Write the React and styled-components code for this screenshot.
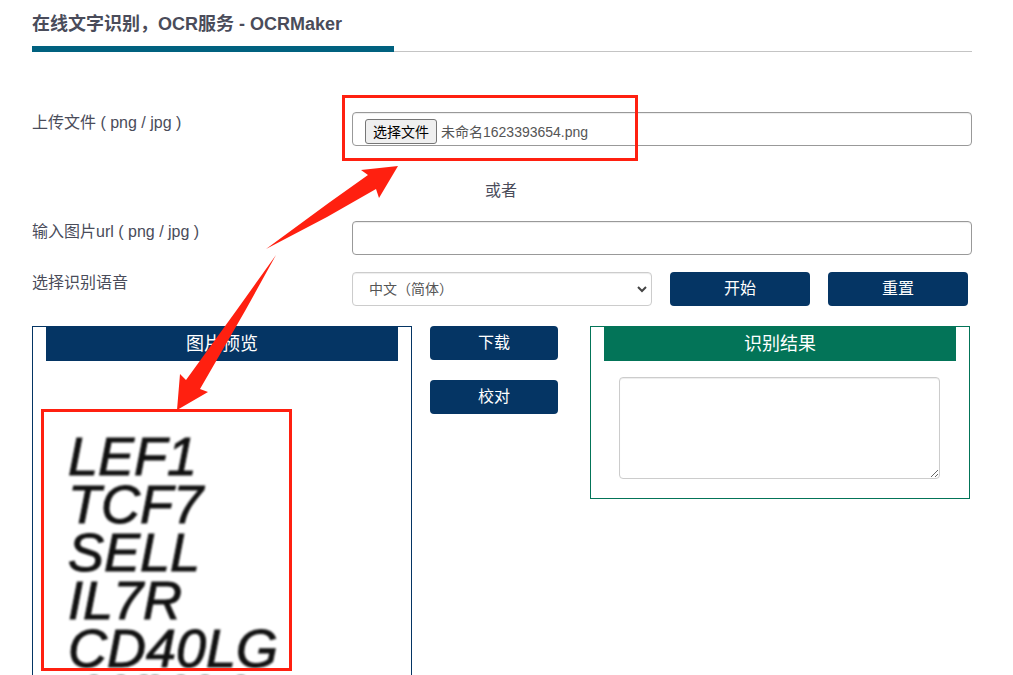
import React, { useRef, useState } from "react";
import styled, { createGlobalStyle } from "styled-components";

const navy = "#053564";
const green = "#037458";
const red = "#ff2010";

const GlobalStyle = createGlobalStyle`
  * { box-sizing: border-box; }
  body {
    margin: 0;
    background: #fff;
    color: #4a4c5a;
    font: 16px/24px "Liberation Sans", "Noto Sans CJK SC", sans-serif;
  }
  button, input, select, textarea { font-family: inherit; }
`;

const Page = styled.main`
  position: relative;
  height: 100vh;
  min-height: 540px;
  overflow: hidden;
  padding: 12px 41px 0 32px;
`;

const Title = styled.h1`
  margin: 0;
  height: 40px;
  border-bottom: 1px solid #c4c4c4;
  font-size: 18px;
  line-height: 24px;
`;

const TitleText = styled.span`
  display: block;
  width: 362px;
  height: 40px;
  border-bottom: 6px solid #00617f;
`;

const Form = styled.form`
  padding-top: 60px;
`;

const Row = styled.div`
  display: grid;
  grid-template-columns: 320px minmax(0, 1fr);
  height: 34px;
  margin-bottom: ${(p) => p.$gap}px;
`;

const Label = styled.label`
  line-height: 22px;
`;

const FileField = styled.div`
  display: flex;
  align-items: flex-start;
  gap: 4px;
  height: 34px;
  padding: 6px 12px 0;
  border: 1px solid #999;
  border-radius: 4px;
  box-shadow: inset 0 1px 1px rgba(0, 0, 0, 0.075);
  color: #555;
  font-size: 14px;
  line-height: 26px;
`;

const HiddenFile = styled.input`
  display: none;
`;

const ChooseButton = styled.button`
  height: 25px;
  padding: 0 7px;
  border: 1px solid #767676;
  border-radius: 3px;
  background: #efefef;
  color: #000;
  font-size: 14px;
  line-height: 24px;
`;

const TextInput = styled.input`
  width: 100%;
  height: 34px;
  padding: 6px 12px;
  border: 1px solid #999;
  border-radius: 4px;
  box-shadow: inset 0 1px 1px rgba(0, 0, 0, 0.075);
  color: #555;
  font-size: 14px;
`;

const Or = styled.p`
  margin: 0 0 18px;
  padding-left: 453px;
  line-height: 24px;
`;

const Controls = styled.div`
  display: flex;
  gap: 18px;
  padding-right: 4px;
`;

const SelectBox = styled.div`
  position: relative;
  flex: 1;
`;

const Select = styled.select`
  appearance: none;
  width: 100%;
  height: 34px;
  padding: 0 16px;
  border: 1px solid #ccc;
  border-radius: 4px;
  background: #fff;
  box-shadow: inset 0 1px 1px rgba(0, 0, 0, 0.075);
  color: #555;
  font-size: 14px;
`;

const Chevron = styled.svg`
  position: absolute;
  right: 5px;
  top: 13px;
  width: 10px;
  height: 8px;
  pointer-events: none;
`;

const Button = styled.button`
  width: ${(p) => p.$width}px;
  height: 34px;
  padding: 0;
  border: 0;
  border-radius: 4px;
  background: ${navy};
  color: #fff;
  font-size: 16px;
  line-height: 34px;
`;

const Panels = styled.div`
  display: flex;
  align-items: flex-start;
`;

const Panel = styled.section`
  width: 380px;
  height: ${(p) => p.$height}px;
  padding: 0 13px;
  border: 1px solid ${(p) => p.$color};
`;

const PanelTitle = styled.h2`
  margin: 0;
  height: 34px;
  background: ${(p) => p.$color};
  color: #fff;
  text-align: center;
  font-size: 18px;
  font-weight: 400;
  line-height: 34px;
`;

const Actions = styled.div`
  display: flex;
  flex-direction: column;
  gap: 20px;
  padding: 0 32px 0 18px;
`;

const Preview = styled.div`
  padding: 71px 0 0 22px;
  color: #111;
  font-size: 54px;
  font-style: italic;
  line-height: 48px;
  filter: blur(1px);
  -webkit-text-stroke: 1px #111;
`;

const NextLine = styled.svg`
  display: block;
  width: 200px;
  height: 6px;
`;

const Result = styled.textarea`
  display: block;
  width: 321px;
  height: 102px;
  margin: 16px 15px;
  padding: 6px 12px;
  border: 1px solid #ccc;
  border-radius: 4px;
  box-shadow: inset 0 1px 1px rgba(0, 0, 0, 0.075);
  color: #555;
  font-size: 14px;
`;

const Marks = styled.svg`
  position: absolute;
  top: 0;
  left: 0;
  width: 660px;
  height: 675px;
  pointer-events: none;
`;

const previewLines = ["LEF1", "TCF7", "SELL", "IL7R", "CD40LG"];
const nextLineTops = [26, 53, 76, 87, 113, 137, 173];

export default function App() {
  const picker = useRef(null);
  const [fileName, setFileName] = useState("未命名1623393654.png");

  return (
    <Page>
      <GlobalStyle />
      <Title>
        <TitleText>在线文字识别，OCR服务 - OCRMaker</TitleText>
      </Title>
      <Form onSubmit={(e) => e.preventDefault()}>
        <Row $gap={33}>
          <Label htmlFor="file">上传文件 ( png / jpg )</Label>
          <FileField>
            <HiddenFile
              ref={picker}
              id="file"
              type="file"
              accept="image/png,image/jpeg"
              onChange={(e) => e.target.files[0] && setFileName(e.target.files[0].name)}
            />
            <ChooseButton type="button" onClick={() => picker.current.click()}>选择文件</ChooseButton>
            <span>{fileName}</span>
          </FileField>
        </Row>
        <Or>或者</Or>
        <Row $gap={17}>
          <Label htmlFor="url">输入图片url ( png / jpg )</Label>
          <TextInput id="url" type="text" />
        </Row>
        <Row $gap={20}>
          <Label htmlFor="language">选择识别语音</Label>
          <Controls>
            <SelectBox>
              <Select id="language">
                <option>中文（简体）</option>
              </Select>
              <Chevron viewBox="0 0 10 8" aria-hidden="true">
                <path d="M1 2l4 4 4-4" fill="none" stroke="#444" strokeWidth="2" />
              </Chevron>
            </SelectBox>
            <Button type="button" $width={140}>开始</Button>
            <Button type="reset" $width={140}>重置</Button>
          </Controls>
        </Row>
      </Form>
      <Panels>
        <Panel $color={navy} $height={420}>
          <PanelTitle $color={navy}>图片预览</PanelTitle>
          <Preview>
            {previewLines.map((line) => <div key={line}>{line}</div>)}
            <NextLine viewBox="0 0 200 6" aria-hidden="true">
              {nextLineTops.map((x) => (
                <ellipse key={x} cx={x} cy="4" rx="4" ry="1" fill="#555" />
              ))}
            </NextLine>
          </Preview>
        </Panel>
        <Actions>
          <Button type="button" $width={128}>下载</Button>
          <Button type="button" $width={128}>校对</Button>
        </Actions>
        <Panel $color={green} $height={173}>
          <PanelTitle $color={green}>识别结果</PanelTitle>
          <Result aria-label="识别结果" />
        </Panel>
      </Panels>
      <Marks viewBox="0 0 660 675" aria-hidden="true">
        <g fill="none" stroke={red} strokeWidth="3">
          <rect x="343.5" y="96.5" width="293" height="63" />
          <rect x="42.5" y="410.5" width="248" height="259" />
        </g>
        <g fill={red}>
          <path d="M266 249L330 202L368 175L361 170L398 166L379 198L376 189L327 217Z" />
          <path d="M276 255L236 311L186 380L180 374L177 410L208 392L200 389L245 311Z" />
        </g>
      </Marks>
    </Page>
  );
}
